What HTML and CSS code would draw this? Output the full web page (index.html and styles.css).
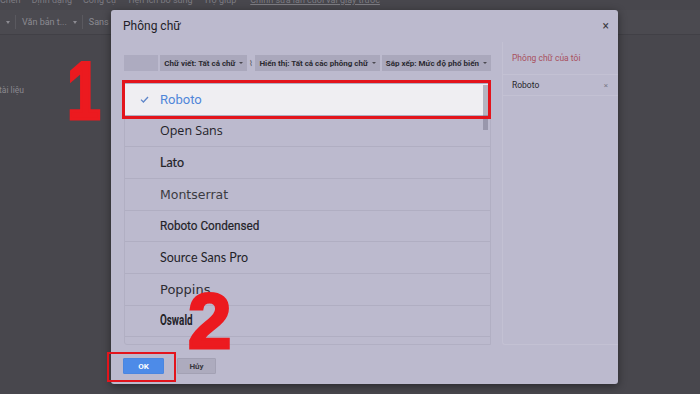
FILE: index.html
```html
<!DOCTYPE html>
<html lang="vi">

<head>
    <meta charset="UTF-8">
    <meta name="viewport" content="width=device-width, initial-scale=1.0">
    <link rel="stylesheet" href="styles.css">
</head>

<body>
    <div class="menubar">
        <span>Chèn</span>
        <span>Định dạng</span>
        <span>Công cụ</span>
        <span>Tiện ích bổ sung</span>
        <span>Trợ giúp</span>
        <span class="last-edit">Chỉnh sửa lần cuối vài giây trước</span>
    </div>

    <div class="toolbar">
        <span class="tool drop"></span>
        <span class="tool drop">Văn bản t...</span>
        <span class="tool">Sans Serif</span>
    </div>

    <div class="page">
        <p class="doc-text">tài liệu</p>
    </div>

    <div class="dialog">
        <div class="dialog-head">
            <h2>Phông chữ</h2>
            <span class="close">×</span>
        </div>

        <div class="dialog-body">
            <div class="browse">
                <div class="filters">
                    <span class="filter blank"></span>
                    <span class="filter drop">Chữ viết: Tất cả chữ</span>
                    <span class="filter-sep">⌇</span>
                    <span class="filter drop">Hiển thị: Tất cả các phông chữ</span>
                    <span class="filter drop">Sắp xếp: Mức độ phổ biến</span>
                </div>

                <ul class="font-list">
                    <li class="selected">
                        <svg class="check" width="9" height="7" viewBox="0 0 9 7">
                            <polyline points="1,3.6 3.4,6 8,1" fill="none" stroke="#5f86c9" stroke-width="1.3" />
                        </svg>
                        <span class="f-roboto">Roboto</span>
                    </li>
                    <li><span class="f-opensans">Open Sans</span></li>
                    <li><span class="f-lato">Lato</span></li>
                    <li><span class="f-montserrat">Montserrat</span></li>
                    <li><span class="f-condensed">Roboto Condensed</span></li>
                    <li><span class="f-source">Source Sans Pro</span></li>
                    <li><span class="f-poppins">Poppins</span></li>
                    <li><span class="f-oswald">Oswald</span></li>
                    <li><span class="f-roboto">Merriweather</span></li>
                    <div class="scroll-thumb"></div>
                </ul>
            </div>

            <div class="mine">
                <h3>Phông chữ của tôi</h3>
                <div class="mine-item">
                    <span>Roboto</span>
                    <span class="remove">×</span>
                </div>
            </div>
        </div>

        <div class="dialog-foot">
            <button class="btn ok">OK</button>
            <button class="btn">Hủy</button>
        </div>
    </div>

    <!-- tutorial markers drawn over the screenshot -->
    <div class="mark mark-one">1</div>
    <div class="mark mark-two">2</div>
    <div class="hilite hilite-row"></div>
    <div class="hilite hilite-ok"></div>
</body>

</html>
```

FILE: styles.css
```css
html {
    background-color: #48474d;
}

body {
    margin: 0;
    width: 700px;
    height: 394px;
    overflow: hidden;
    position: relative;
    font-family: Roboto, "Liberation Sans", sans-serif;
}

p,
h2,
h3,
ul {
    margin: 0;
    padding: 0;
}

/* docs chrome behind the dialog */

.menubar {
    height: 10px;
    overflow: hidden;
    display: flex;
    gap: 11px;
    font-size: 9px;
    line-height: 10px;
    color: #7c7b82;
}

.menubar span {
    margin-top: -5px;
}

.menubar .last-edit {
    text-decoration: underline;
    margin-left: 3px;
}

.toolbar {
    height: 24px;
    display: flex;
    align-items: center;
    background-color: #4b4a50;
    border-bottom: 1px solid #414046;
    font-size: 9px;
    color: #8c8b92;
}

.tool {
    padding: 0 5px 0 6px;
    border-right: 1px solid #5a595f;
    line-height: 14px;
}

.tool:first-child {
    padding: 0 5px 0 0;
}

.tool.drop::after {
    content: "";
    display: inline-block;
    margin-left: 6px;
    vertical-align: middle;
    border-left: 2.5px solid transparent;
    border-right: 2.5px solid transparent;
    border-top: 3px solid #8c8b92;
}

.page {
    padding: 50px 0 0 0;
}

.doc-text {
    font-size: 8.5px;
    color: #8a8990;
    margin-left: -1px;
}

/* font dialog */

.dialog {
    position: absolute;
    left: 111px;
    top: 10px;
    width: 507px;
    height: 374px;
    background-color: #bcbace;
    border-radius: 3px;
    box-shadow: 0 2px 8px rgba(0, 0, 0, 0.45);
    display: flex;
    flex-direction: column;
}

.dialog-head {
    height: 32px;
    display: flex;
    align-items: center;
    justify-content: space-between;
    padding: 0 9px 0 12px;
}

.dialog-head h2 {
    font-size: 12px;
    font-weight: 400;
    color: #222127;
}

.close {
    font-size: 12px;
    color: #3d3c44;
}

.dialog-body {
    height: 303px;
    display: flex;
}

.browse {
    width: 367px;
    margin-left: 13px;
    display: flex;
    flex-direction: column;
}

.filters {
    margin-top: 13px;
    height: 16px;
    display: flex;
    gap: 2px;
    font-size: 8px;
    font-weight: 700;
    color: #2b2a31;
}

.filter {
    background-color: #aaa8bc;
    display: flex;
    align-items: center;
    padding: 0 4px;
    white-space: nowrap;
}

.filter.blank {
    width: 41px;
    padding: 0;
    background-color: #adabc0;
}

.filter.drop::after {
    content: "";
    margin-left: 4px;
    border-left: 2px solid transparent;
    border-right: 2px solid transparent;
    border-top: 2.5px solid #4a4950;
}

.filter-sep {
    display: flex;
    align-items: center;
    color: #55545c;
    font-weight: 400;
}

.font-list {
    list-style: none;
    margin-top: 12px;
    flex: 1;
    position: relative;
    overflow: hidden;
    border: 1px solid #b1afc3;
    border-radius: 0 0 0 3px;
}

.font-list li {
    height: 31.67px;
    box-sizing: border-box;
    border-bottom: 1px solid #b0aec2;
    display: flex;
    align-items: center;
    padding-left: 35px;
    font-size: 13px;
    color: #232228;
}

.font-list li.selected {
    background-color: #efeef2;
    padding-left: 15px;
}

.check {
    margin-right: 11px;
}

.f-roboto {
    font-family: Roboto, sans-serif;
}

.selected .f-roboto {
    color: #4f86d9;
}

.f-opensans {
    font-family: "Open Sans", sans-serif;
    font-size: 12.5px;
}

.f-lato {
    font-family: Lato, sans-serif;
    font-size: 12.5px;
    -webkit-text-stroke: 0.2px #232228;
}

.f-montserrat {
    font-family: "DejaVu Sans", sans-serif;
    font-size: 12.5px;
    color: #3b3a41;
}

.f-condensed {
    font-family: Roboto, sans-serif;
    font-size: 13px;
    -webkit-text-stroke: 0.2px #232228;
    display: inline-block;
    transform: scaleX(0.9);
    transform-origin: left center;
}

.f-source {
    font-family: Lato, sans-serif;
    font-size: 12.5px;
}

.f-poppins {
    font-family: "DejaVu Sans", sans-serif;
    font-size: 13px;
    color: #2e2d34;
}

.f-oswald {
    font-family: Roboto, sans-serif;
    font-weight: 700;
    font-size: 14.5px;
    display: inline-block;
    transform: scaleX(0.68);
    transform-origin: left center;
}

.scroll-thumb {
    position: absolute;
    right: 2px;
    top: 1px;
    width: 5px;
    height: 45px;
    background-color: rgba(110, 108, 130, 0.45);
}

.mine {
    flex: 1;
    margin-left: 11px;
    border-left: 1px solid #c3c1d3;
    border-bottom: 1px solid #c3c1d3;
    border-radius: 0 0 0 3px;
}

.mine h3 {
    height: 32px;
    border-bottom: 1px solid #c3c1d3;
    display: flex;
    align-items: center;
    padding-left: 9px;
    font-size: 8.5px;
    font-weight: 400;
    color: #a9505e;
}

.mine-item {
    height: 20px;
    border-bottom: 1px solid #c3c1d3;
    display: flex;
    align-items: center;
    justify-content: space-between;
    padding: 0 10px 0 9px;
    font-size: 8.5px;
    color: #26252b;
}

.remove {
    font-size: 8px;
    color: #7c7a88;
}

.dialog-foot {
    display: flex;
    gap: 13px;
    padding: 13px 0 0 12px;
}

.btn {
    height: 16px;
    border: 1px solid #a3a1b4;
    border-radius: 1px;
    background-color: #adabbe;
    font-family: Roboto, sans-serif;
    font-size: 8px;
    font-weight: 700;
    color: #3a3940;
    width: 39px;
    padding: 0;
}

.btn.ok {
    width: 41px;
    background-color: #4d8be8;
    border-color: #4a86e0;
    color: #ffffff;
}

/* red annotations */

.mark {
    position: absolute;
    font-family: "Liberation Sans", sans-serif;
    font-weight: 700;
    font-size: 82px;
    line-height: 1;
    color: #ec1a1f;
    -webkit-text-stroke: 3px #ec1a1f;
}

.mark-one {
    left: 67px;
    top: 50px;
    transform: scaleX(0.74);
    transform-origin: left top;
}

.mark-two {
    left: 188px;
    top: 282px;
    font-size: 78px;
}

.hilite {
    position: absolute;
    box-sizing: border-box;
    border: 3px solid #e3141c;
}

.hilite-row {
    left: 122px;
    top: 80px;
    width: 369px;
    height: 39px;
}

.hilite-ok {
    left: 107px;
    top: 352px;
    width: 69px;
    height: 30px;
    border-width: 2.5px;
}
```
